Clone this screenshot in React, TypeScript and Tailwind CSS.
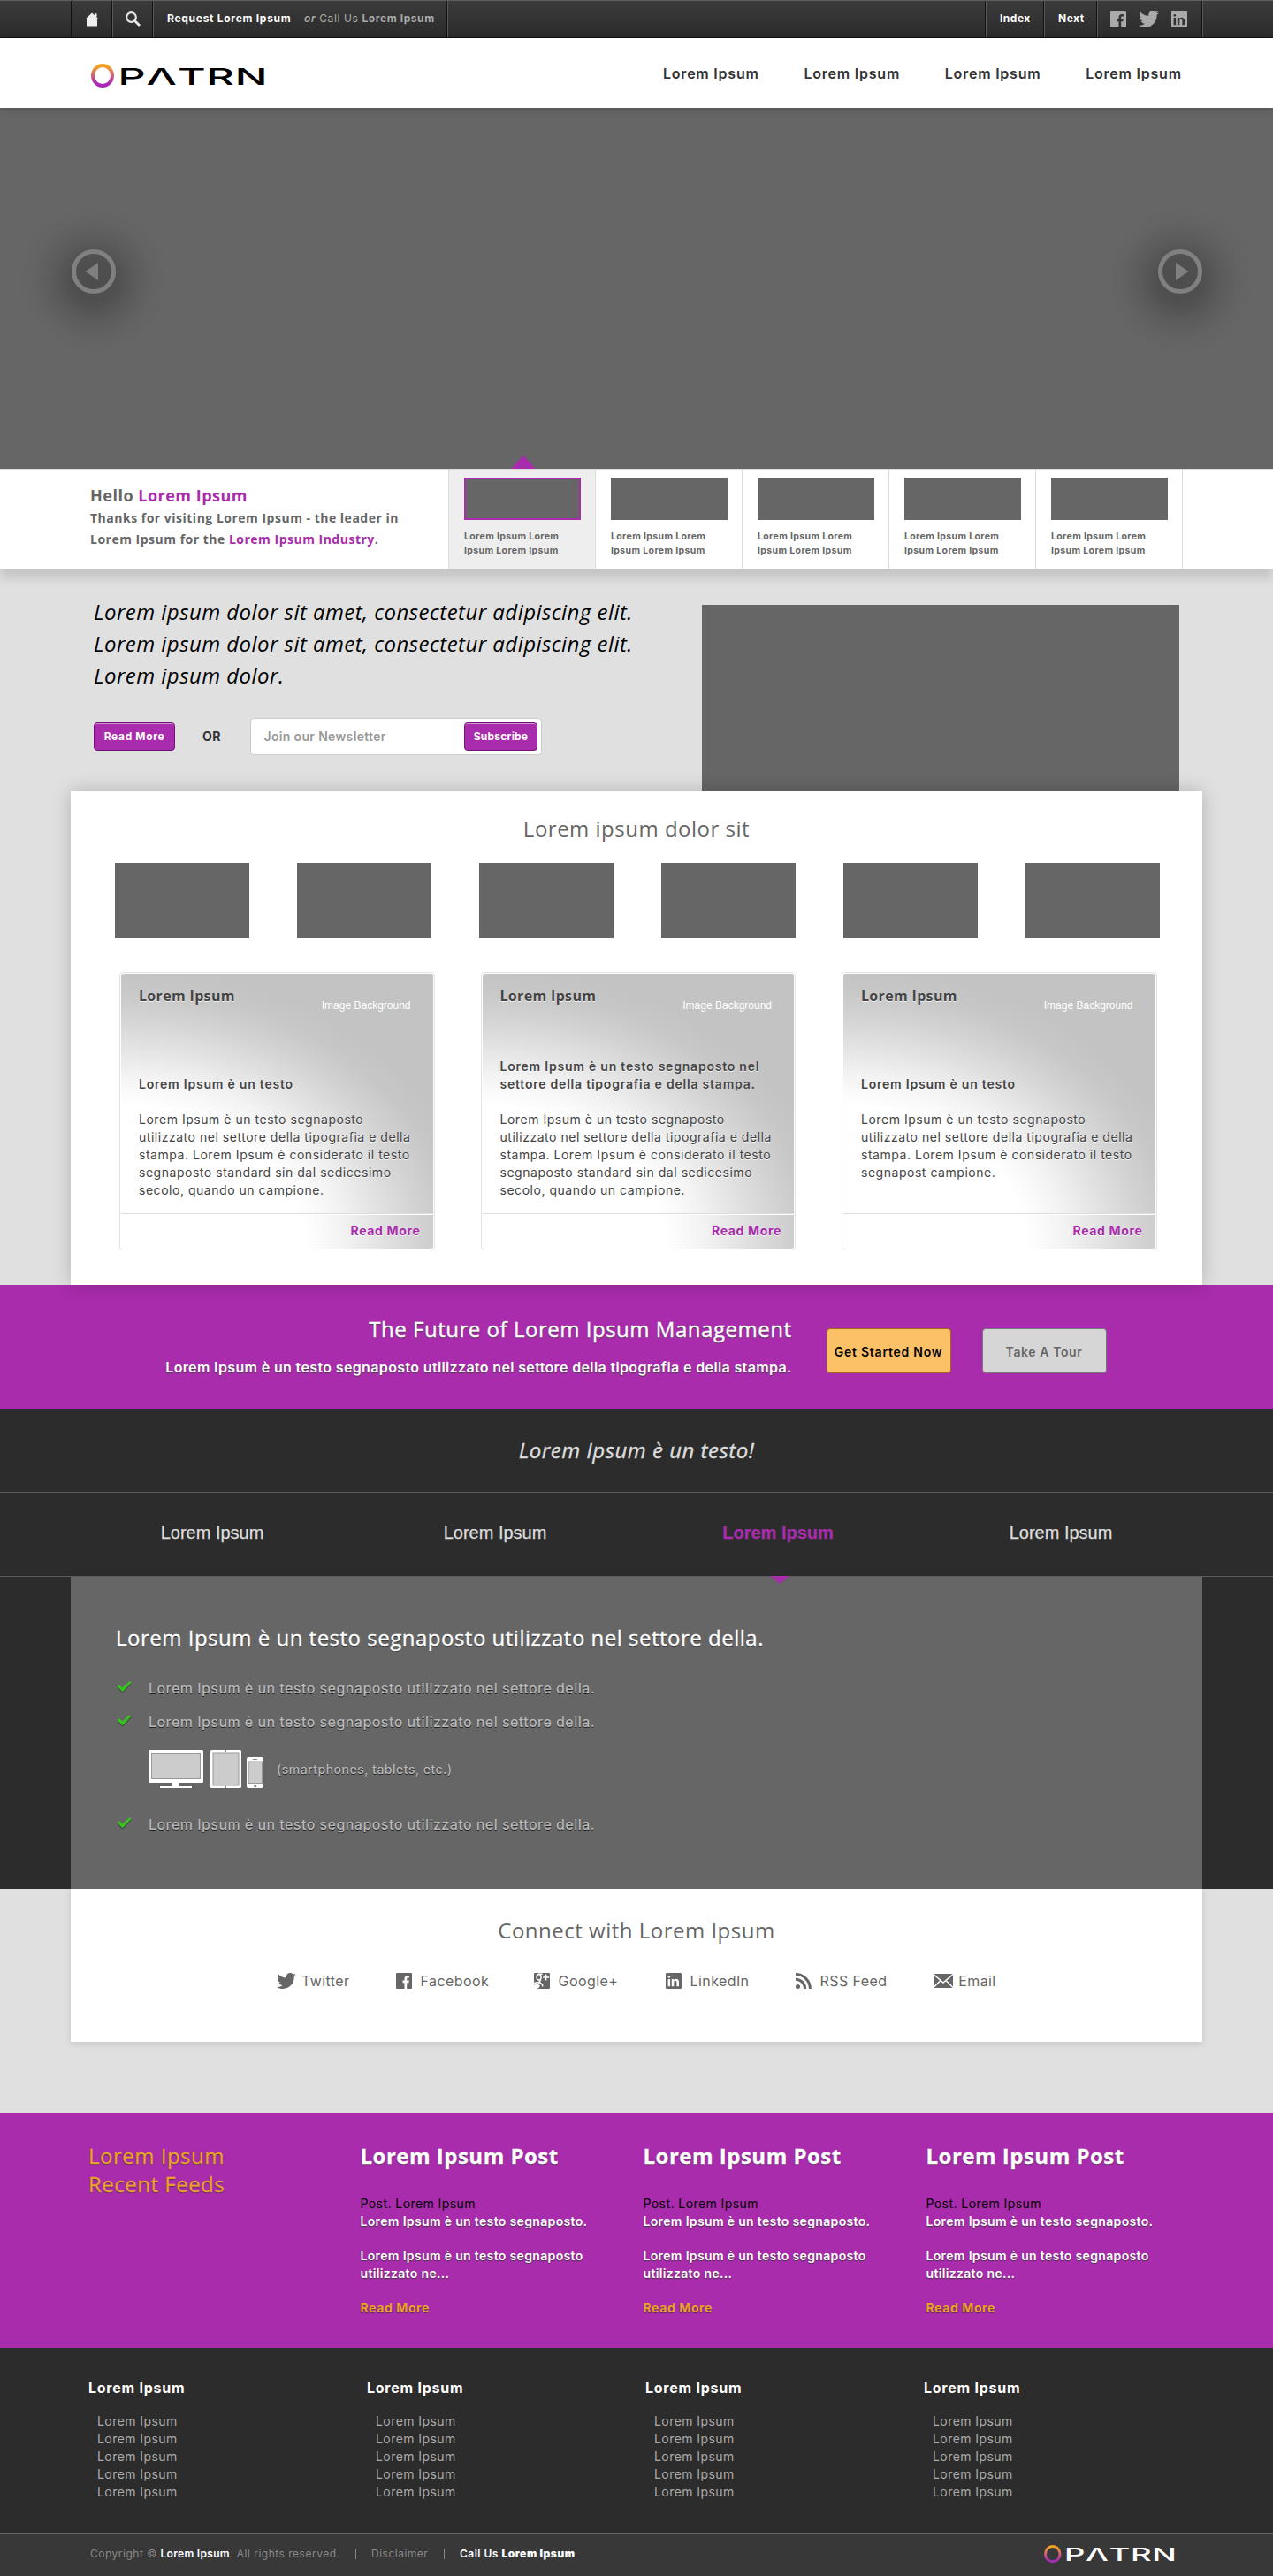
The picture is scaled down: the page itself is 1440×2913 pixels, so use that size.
import type { ReactNode } from 'react';
import { FaTwitter } from 'react-icons/fa';

const OPEN = "font-['Open_Sans',sans-serif]";

function Logo({ color, width, id }: { color: string; width: number; id: string }) {
  return (
    <svg width={width} height={(width * 27) / 197} viewBox="0 0 197 27" aria-label="PATRN" className="block overflow-visible">
      <defs>
        <linearGradient id={id} x1="0" y1="0" x2="0" y2="1">
          <stop offset="0.05" stopColor="#f2a126" />
          <stop offset="0.5" stopColor="#cf5f7b" />
          <stop offset="0.9" stopColor="#a82bb4" />
        </linearGradient>
      </defs>
      <ellipse cx="13" cy="13.5" rx="11" ry="11.5" fill="none" stroke={`url(#${id})`} strokeWidth="4" />
      <text x="30.5" y="24" fill={color} fontFamily="Inter, sans-serif" fontWeight="500" fontSize="26" textLength="170" lengthAdjust="spacingAndGlyphs">
        PΛTRN
      </text>
    </svg>
  );
}

function FacebookIcon({ size = 18 }: { size?: number }) {
  return (
    <svg width={size} height={size} viewBox="0 0 18 18" className="block">
      <path fillRule="evenodd" fill="currentColor" d="M1 0h16a1 1 0 0 1 1 1v16a1 1 0 0 1-1 1H1a1 1 0 0 1-1-1V1a1 1 0 0 1 1-1zM12.2 18v-6.8h2.2l.4-2.6h-2.6V7c0-.9.3-1.4 1.4-1.4h1.3V3.200c-.4 0-1.100-.1-1.900-.1-2.200 0-3.500 1.200-3.500 3.500v2H7.500v2.600h2V18z" />
    </svg>
  );
}

function LinkedInIcon({ size = 18 }: { size?: number }) {
  return (
    <svg width={size} height={size} viewBox="0 0 18 18" className="block">
      <path fillRule="evenodd" fill="currentColor" d="M1 0h16a1 1 0 0 1 1 1v16a1 1 0 0 1-1 1H1a1 1 0 0 1-1-1V1a1 1 0 0 1 1-1zM2.600 7v8.200h2.500V7zM3.850 2.900a1.450 1.450 0 1 0 0 2.900 1.450 1.450 0 0 0 0-2.900zM6.800 7v8.200h2.500v-4.500c0-1.200.5-1.900 1.600-1.900s1.500.8 1.500 1.900v4.500h2.600v-4.900c0-2.300-1.200-3.500-3-3.500-1.400 0-2.200.7-2.700 1.500V7z" />
    </svg>
  );
}

function GooglePlusIcon() {
  return (
    <svg width="18" height="18" viewBox="0 0 18 18" className="block">
      <rect width="18" height="18" rx="1" fill="#666" />
      <g fill="none" stroke="#fff">
        <ellipse cx="5.600" cy="4.800" rx="2.500" ry="3.300" strokeWidth="1.500" />
        <path d="M5 1.300h4.500M8 8c-1.500 1-2.500 1.800-.8 3 2 1.400 3 2.600 2.300 4.600M0 11.800c2-1.300 5-1.200 6.500-.6" strokeWidth="1.500" />
        <path d="M13.700 1.500v7M10.200 5h7" strokeWidth="1.300" />
      </g>
      <path d="M0 13.500c2-1.300 6-1.200 6.500.8.300 1.700-1 3-3 3.700H0z" fill="#fff" />
    </svg>
  );
}

function RssIcon() {
  return (
    <svg width="18" height="18" viewBox="0 0 18 18" className="block">
      <circle cx="2.500" cy="15.500" r="2.500" fill="#666" />
      <path d="M0 7.300A10.700 10.700 0 0 1 10.700 18M0 1.600A16.400 16.400 0 0 1 16.400 18" fill="none" stroke="#666" strokeWidth="3" />
    </svg>
  );
}

function MailIcon() {
  return (
    <svg width="22" height="16" viewBox="0 0 22 16" className="block">
      <rect width="22" height="16" fill="#666" />
      <path d="M0 .5l11 9.500L22 .5M0 15.500L8 7.500M22 15.500L14 7.500" fill="none" stroke="#fff" strokeWidth="1.400" />
    </svg>
  );
}

function CheckIcon() {
  return (
    <svg width="18" height="14" viewBox="0 0 18 14" className="block">
      <path d="M.5 6.500L3 4.800l3.300 3.300L14.500.8l2.200 1.300L6.700 12.800z" fill="#222" opacity=".5" transform="translate(0 1)" />
      <path d="M.5 6L3 4.300l3.300 3.300L14.500.3l2.200 1.300L6.700 12.300z" fill="#35c41e" />
    </svg>
  );
}

function Devices() {
  return (
    <svg width="130" height="44" viewBox="0 0 130 44" className="block">
      <g fill="#fff">
        <rect width="62" height="37" rx="1.500" />
        <rect x="27" y="37" width="8" height="4" />
        <rect x="13" y="41" width="36" height="2" />
        <rect x="70" width="35" height="43" rx="1.500" />
        <rect x="111" y="8" width="19" height="35" rx="2" />
      </g>
      <g fill="#ccc" stroke="#999">
        <rect x="3.500" y="3.500" width="55" height="29" />
        <rect x="73" y="3" width="29" height="37" />
        <rect x="113" y="13" width="15.500" height="24.500" />
      </g>
      <g fill="#888">
        <rect x="86.500" y="0" width="1.500" height="2" />
        <rect x="86.500" y="41" width="1.500" height="2" />
        <circle cx="120.700" cy="40.500" r="1.700" />
        <rect x="118" y="10" width="5" height="1" />
      </g>
    </svg>
  );
}

function HeroArrow({ flip }: { flip?: boolean }) {
  return (
    <button className="relative flex size-[50px] items-center justify-center">
      <span className="pointer-events-none absolute -top-[50px] -left-[60px] h-[170px] w-[170px] bg-[radial-gradient(circle_closest-side,rgba(0,0,0,0.25)_0%,rgba(0,0,0,0.22)_30%,rgba(0,0,0,0.1)_55%,rgba(0,0,0,0.03)_78%,transparent_100%)]" />
      <svg width="50" height="50" viewBox="0 0 50 50" className={flip ? 'relative rotate-180' : 'relative'}>
        <circle cx="25" cy="25" r="22.500" fill="none" stroke="#808080" strokeWidth="5" />
        <path d="M15.500 25L30 15v20z" fill="#808080" />
      </svg>
    </button>
  );
}

function TopCell({ className, children }: { className: string; children: ReactNode }) {
  return <div className={`flex items-center border-r border-l border-r-[#111] border-l-[#595959] ${className}`}>{children}</div>;
}

function PurpleButton({ className, children }: { className: string; children: ReactNode }) {
  return (
    <button className={`h-8 rounded-[4px] border border-[#6f1273] bg-[#a82cab] text-xs font-bold text-white shadow-[inset_0_1px_0_rgba(255,255,255,0.5)] ${className}`}>
      {children}
    </button>
  );
}

const cards = [
  { sub: 'Lorem Ipsum è un testo', lines: ['Lorem Ipsum è un testo segnaposto', 'utilizzato nel settore della tipografia e della', 'stampa. Lorem Ipsum è considerato il testo', 'segnaposto standard sin dal sedicesimo', 'secolo, quando un campione.'] },
  { sub: 'Lorem Ipsum è un testo segnaposto nel settore della tipografia e della stampa.', lines: ['Lorem Ipsum è un testo segnaposto', 'utilizzato nel settore della tipografia e della', 'stampa. Lorem Ipsum è considerato il testo', 'segnaposto standard sin dal sedicesimo', 'secolo, quando un campione.'] },
  { sub: 'Lorem Ipsum è un testo', lines: ['Lorem Ipsum è un testo segnaposto', 'utilizzato nel settore della tipografia e della', 'stampa. Lorem Ipsum è considerato il testo', 'segnapost campione.'] },
];

function Card({ sub, lines }: { sub: string; lines: string[] }) {
  return (
    <div className="h-[315px] w-[356.500px] rounded-[4px] border border-[#e2e2e2] bg-white p-px">
      <div className="flex h-full flex-col rounded-[3px] bg-[radial-gradient(ellipse_95%_84%_at_0%_100%,#fff_62%,#f3f3f3_75%,#e2e2e2_88%,#d2d2d2_101%,#c7c7c7_112%,#c3c3c3_122%)] text-[#444] [text-shadow:0_1px_0_rgba(255,255,255,0.8)]">
        <div className="flex h-[135px] flex-col justify-between pt-[15px] pl-5">
          <div className="flex items-start justify-between pr-[25px]">
            <h3 className={`${OPEN} text-base/5 font-bold tracking-[0.330px]`}>Lorem Ipsum</h3>
            <span className="mt-[13px] font-['Liberation_Sans',sans-serif] text-xs/4 tracking-normal text-white [text-shadow:none]">Image Background</span>
          </div>
          <p className="w-[315px] text-sm/5 font-semibold tracking-[0.780px]">{sub}</p>
        </div>
        <div className="mt-5 h-[116px] pl-5 text-sm/5 tracking-[0.530px]">
          {lines.map((l) => (
            <p key={l} className="whitespace-nowrap">{l}</p>
          ))}
        </div>
        <div className="flex flex-1 items-center justify-end border-t border-[#ddd] pr-[14px] pb-px text-sm font-bold tracking-[0.650px] text-[#a82cab] shadow-[inset_0_1px_0_#fff]">
          Read More
        </div>
      </div>
    </div>
  );
}

const social: [string, string, ReactNode][] = [
  ['Twitter', 'w-[134.600px]', <FaTwitter size={22} className="-mt-px" />],
  ['Facebook', 'w-[156px]', <FacebookIcon />],
  ['Google+', 'w-[149px]', <GooglePlusIcon />],
  ['LinkedIn', 'w-[147px]', <LinkedInIcon />],
  ['RSS Feed', 'w-[156.700px]', <RssIcon />],
  ['Email', 'w-[80px]', <MailIcon />],
];

function Feature() {
  return (
    <li className="flex h-[38px] items-center text-base font-medium tracking-[0.450px] text-[#b8b8b8] [text-shadow:0_1px_0_#222]">
      <span className="-mt-0.5 w-9"><CheckIcon /></span>
      Lorem Ipsum è un testo segnaposto utilizzato nel settore della.
    </li>
  );
}

export default function App() {
  return (
    <div className="w-[1440px] bg-[#e0e0e0] font-[Inter,sans-serif] tracking-[0.5px] text-[#666]">
      {/* Utility bar */}
      <div className="flex h-[43px] border-t border-b border-t-[#606060] border-b-[#111] bg-linear-to-b from-[#3b3b3b] to-[#2b2b2b] text-xs text-white">
        <div className="w-[81px] border-r border-[#111]" />
        <TopCell className="w-[46px] justify-center">
          <svg width="16" height="16" viewBox="0 0 16 16"><path d="M8 .5L0 8h2v7.500h12V8h2l-2.500-2.400V1.200h-2.500v2z" fill="#eee" /></svg>
        </TopCell>
        <TopCell className="w-[46px] justify-center">
          <svg width="17" height="17" viewBox="0 0 17 17" fill="none" stroke="#e6e6e6"><circle cx="6.500" cy="6.500" r="5.300" strokeWidth="2.200" /><path d="M10.500 10.500L16 16" strokeWidth="2.800" /></svg>
        </TopCell>
        <TopCell className="w-[333px] pb-px pl-[15px]">
          <b className="w-[155px] tracking-[0.720px]">Request Lorem Ipsum</b>
          <span className="tracking-[0.600px] text-[#aaa]"><em className="font-semibold">or</em> Call Us <b className="tracking-[0.600px]">Lorem Ipsum</b></span>
        </TopCell>
        <TopCell className="w-[609px]">{null}</TopCell>
        <TopCell className="w-[66px] pb-px pl-[15px] font-bold">Index</TopCell>
        <TopCell className="w-[60px] pb-px pl-[15px] font-bold">Next</TopCell>
        <TopCell className="w-[119px] gap-[14px] pl-[14px] text-[#aaa]">
          <FacebookIcon /><FaTwitter size={23} /><LinkedInIcon />
        </TopCell>
        <div className="flex-1 border-l border-[#595959]" />
      </div>

      {/* Header */}
      <header className="relative z-10 flex h-[79px] items-center bg-white pl-[103px] shadow-[0_2px_8px_rgba(0,0,0,0.18)]">
        <div className="mt-1.5 w-[647px]"><Logo color="#000" width={197} id="ring-head" /></div>
        <nav className="flex text-base font-semibold tracking-[0.780px] text-[#333]">
          {[0, 1, 2, 3].map((i) => <a key={i} className="w-[159.400px]">Lorem Ipsum</a>)}
        </nav>
      </header>

      {/* Hero slider */}
      <section className="flex h-[408px] justify-between bg-[#666] pt-[160px] pr-20 pl-[81px]">
        <HeroArrow />
        <HeroArrow flip />
      </section>
      <section className="relative flex h-[114px] border-t border-b border-[#ddd] bg-white pl-[102px] shadow-[0_10px_10px_rgba(0,0,0,0.12)]">
        <div className={`${OPEN} w-[405px] pt-[17px] text-sm/6 font-bold`}>
          <h2 className="mb-0.5 text-lg/6">Hello <span className="text-[#a82cab]">Lorem Ipsum</span></h2>
          <p>Thanks for visiting Lorem Ipsum - the leader in</p>
          <p>Lorem Ipsum for the <span className="text-[#a82cab]">Lorem Ipsum Industry</span>.</p>
        </div>
        {[0, 1, 2, 3, 4].map((i) => (
          <div key={i} className={`relative border-l border-[#dcdcdc] pt-[9px] pl-[17px] ${i === 0 ? 'bg-[#eee]' : ''} ${i === 4 ? 'w-[167px] border-r' : 'w-[166px]'}`}>
            {i === 0 && (
              <svg width="28" height="15" viewBox="0 0 28 15" className="absolute -top-4 left-[70px]"><path d="M0 15L14 0l14 15z" fill="#a82cab" /></svg>
            )}
            <div className={`h-12 w-[132px] bg-[#666] ${i === 0 ? 'border-2 border-[#a82cab]' : ''}`} />
            <p className="mt-[11px] text-[10.500px]/4 font-bold tracking-[0.370px]">Lorem Ipsum Lorem<br />Ipsum Lorem Ipsum</p>
          </div>
        ))}
      </section>

      {/* Intro */}
      <section className="flex h-[250px] pl-[106px]">
        <div className="w-[688px] pt-[30px]">
          <p className={`${OPEN} text-2xl/9 tracking-[0.450px] text-black italic`}>
            Lorem ipsum dolor sit amet, consectetur adipiscing elit.<br />Lorem ipsum dolor sit amet, consectetur adipiscing elit.<br />Lorem ipsum dolor.
          </p>
          <div className="mt-[30px] flex items-center">
            <PurpleButton className="w-[92px] tracking-[0.650px]">Read More</PurpleButton>
            <span className="ml-[31px] w-[53.500px] text-sm font-bold text-[#333]">OR</span>
            <div className="flex h-[42px] w-[330.500px] items-center justify-between rounded-[4px] border border-[#ccc] bg-white pr-1 pl-[15px]">
              <span className="text-sm font-semibold tracking-[0.340px] text-[#999]">Join our Newsletter</span>
              <PurpleButton className="w-[83px] tracking-[0.200px]">Subscribe</PurpleButton>
            </div>
          </div>
        </div>
        <div className="mt-10 w-[540px] bg-[#666]" />
      </section>

      {/* Feature cards */}
      <section className="relative mx-auto h-[559px] w-[1280px] bg-white pt-[25px] shadow-[0_0_20px_rgba(0,0,0,0.2)]">
        <h2 className={`${OPEN} text-center text-2xl/9`}>Lorem ipsum dolor sit</h2>
        <div className="mt-[21px] flex gap-[54px] pl-[50px]">
          {[0, 1, 2, 3, 4, 5].map((i) => <div key={i} className="h-[85px] w-[152px] bg-[#666]" />)}
        </div>
        <div className="mt-[38px] flex gap-[52px] pl-[55px]">
          {cards.map((c, i) => <Card key={i} {...c} />)}
        </div>
      </section>

      {/* Call to action */}
      <section className="flex h-[140px] bg-[#a82cab]">
        <div className="w-[895.500px] pt-8 text-right text-white [text-shadow:0_1px_1px_#444]">
          <h2 className={`${OPEN} text-2xl/9 tracking-[0.520px] [-webkit-text-stroke:0.350px]`}>The Future of Lorem Ipsum Management</h2>
          <p className="mt-[13px] text-base/6 font-semibold tracking-[0.360px]">Lorem Ipsum è un testo segnaposto utilizzato nel settore della tipografia e della stampa.</p>
        </div>
        <button className="mt-[49px] ml-[39px] h-[51px] w-[141px] rounded-[4px] border border-[#9c6a14] bg-[#fcc166] pt-0.5 text-sm font-semibold tracking-[0.750px] text-black">Get Started Now</button>
        <button className="mt-[49px] ml-[35px] h-[51px] w-[141px] rounded-[4px] border border-[#777] bg-[#d6d6d6] pt-0.5 text-sm font-semibold tracking-[0.600px] text-[#666]">Take A Tour</button>
      </section>

      {/* Tabs */}
      <section className="bg-[#2c2c2c]">
        <h2 className={`${OPEN} flex h-[94px] items-center justify-center text-2xl text-[#ddd] italic [-webkit-text-stroke:0.350px]`}>Lorem Ipsum è un testo!</h2>
        <div className="flex h-24 items-center border-t border-b border-[#5c5c5c] px-20 pb-1 text-center font-['Liberation_Sans',sans-serif] text-xl tracking-normal text-[#ddd] [-webkit-text-stroke:0.250px]">
          {[0, 1, 2, 3].map((i) => <span key={i} className={i === 2 ? 'w-80 font-bold text-[#a82cab]' : 'w-80'}>Lorem Ipsum</span>)}
        </div>
        <div className="relative mx-auto h-[353px] w-[1280px] bg-[#666] pt-[51px] pl-[52px]">
          <svg width="22" height="9" viewBox="0 0 22 9" className="absolute -top-px left-[791px]"><path d="M0 0h22L11 9z" fill="#a82cab" /></svg>
          <h2 className={`${OPEN} -ml-px text-2xl/9 text-white [-webkit-text-stroke:0.350px] [text-shadow:0_1px_0_#222]`}>Lorem Ipsum è un testo segnaposto utilizzato nel settore della.</h2>
          <ul className="mt-5">
            <Feature />
            <Feature />
            <li className="mt-[13px] mb-[21px] flex items-center gap-[15px] pl-9 text-sm font-medium text-[#b8b8b8] [text-shadow:0_1px_0_#222]">
              <Devices />(smartphones, tablets, etc.)
            </li>
            <Feature />
          </ul>
        </div>
      </section>

      {/* Connect */}
      <section className="mx-auto h-[173px] w-[1280px] bg-white pt-[29px] shadow-[0_2px_8px_rgba(0,0,0,0.12)]">
        <h2 className={`${OPEN} text-center text-2xl/9`}>Connect with Lorem Ipsum</h2>
        <div className="mt-[27px] flex h-6 items-center pl-[233px] text-base tracking-[0.400px]">
          {social.map(([label, w, icon]) => (
            <a key={label} className={`flex items-center ${w}`}><span className="w-[28px]">{icon}</span>{label}</a>
          ))}
        </div>
      </section>

      {/* Recent feeds */}
      <section className="mt-20 flex h-[266px] bg-[#a82cab] pt-[33px] pl-[100px] text-white [text-shadow:0_1px_1px_rgba(50,50,50,0.8)]">
        <h2 className={`${OPEN} w-[307.500px] text-2xl/8 text-[#ee9f2e] [-webkit-text-stroke:0.300px]`}>Lorem Ipsum<br />Recent Feeds</h2>
        {[0, 1, 2].map((i) => (
          <div key={i} className="w-80 text-sm/5 font-semibold tracking-[0.340px]">
            <h3 className={`${OPEN} mb-7 text-2xl/8 font-bold tracking-[0.500px] [-webkit-text-stroke:0.300px]`}>Lorem Ipsum Post</h3>
            <p className="font-normal tracking-[0.430px] text-black [text-shadow:none]">Post. Lorem Ipsum</p>
            <p>Lorem Ipsum è un testo segnaposto.</p>
            <p className="mt-[19px]">Lorem Ipsum è un testo segnaposto<br />utilizzato ne...</p>
            <p className="mt-[19px] font-bold tracking-[0.600px] text-[#ee9f2e]">Read More</p>
          </div>
        ))}
      </section>

      {/* Footer */}
      <footer className="bg-[#2c2c2c]">
        <div className="flex h-[209px] pt-[33px] pl-[100px]">
          {[0, 1, 2, 3].map((i) => (
            <div key={i} className="w-[315px] text-sm/5 text-[#aaa]">
              <h4 className="mb-4 text-base/6 font-bold tracking-[0.750px] text-white">Lorem Ipsum</h4>
              {[0, 1, 2, 3, 4].map((j) => <p key={j} className="pl-[10px] tracking-[0.430px]">Lorem Ipsum</p>)}
            </div>
          ))}
        </div>
        <div className="flex h-[49px] items-center border-t border-[#666] bg-[#383838] pb-0.5 pl-[102px] text-xs text-[#888]">
          <span className="w-[300px] whitespace-nowrap">Copyright © <b className="font-semibold tracking-[0.300px] text-white">Lorem Ipsum</b>. All rights reserved.</span>
          <span className="mr-[17px] h-3 w-px bg-[#888]" />
          <span className="w-[82px]">Disclaimer</span>
          <span className="mr-[17px] h-3 w-px bg-[#888]" />
          <span className="w-[661px] font-semibold text-white">Call Us <b>Lorem Ipsum</b></span>
          <Logo color="#fff" width={148} id="ring-foot" />
        </div>
      </footer>
    </div>
  );
}
